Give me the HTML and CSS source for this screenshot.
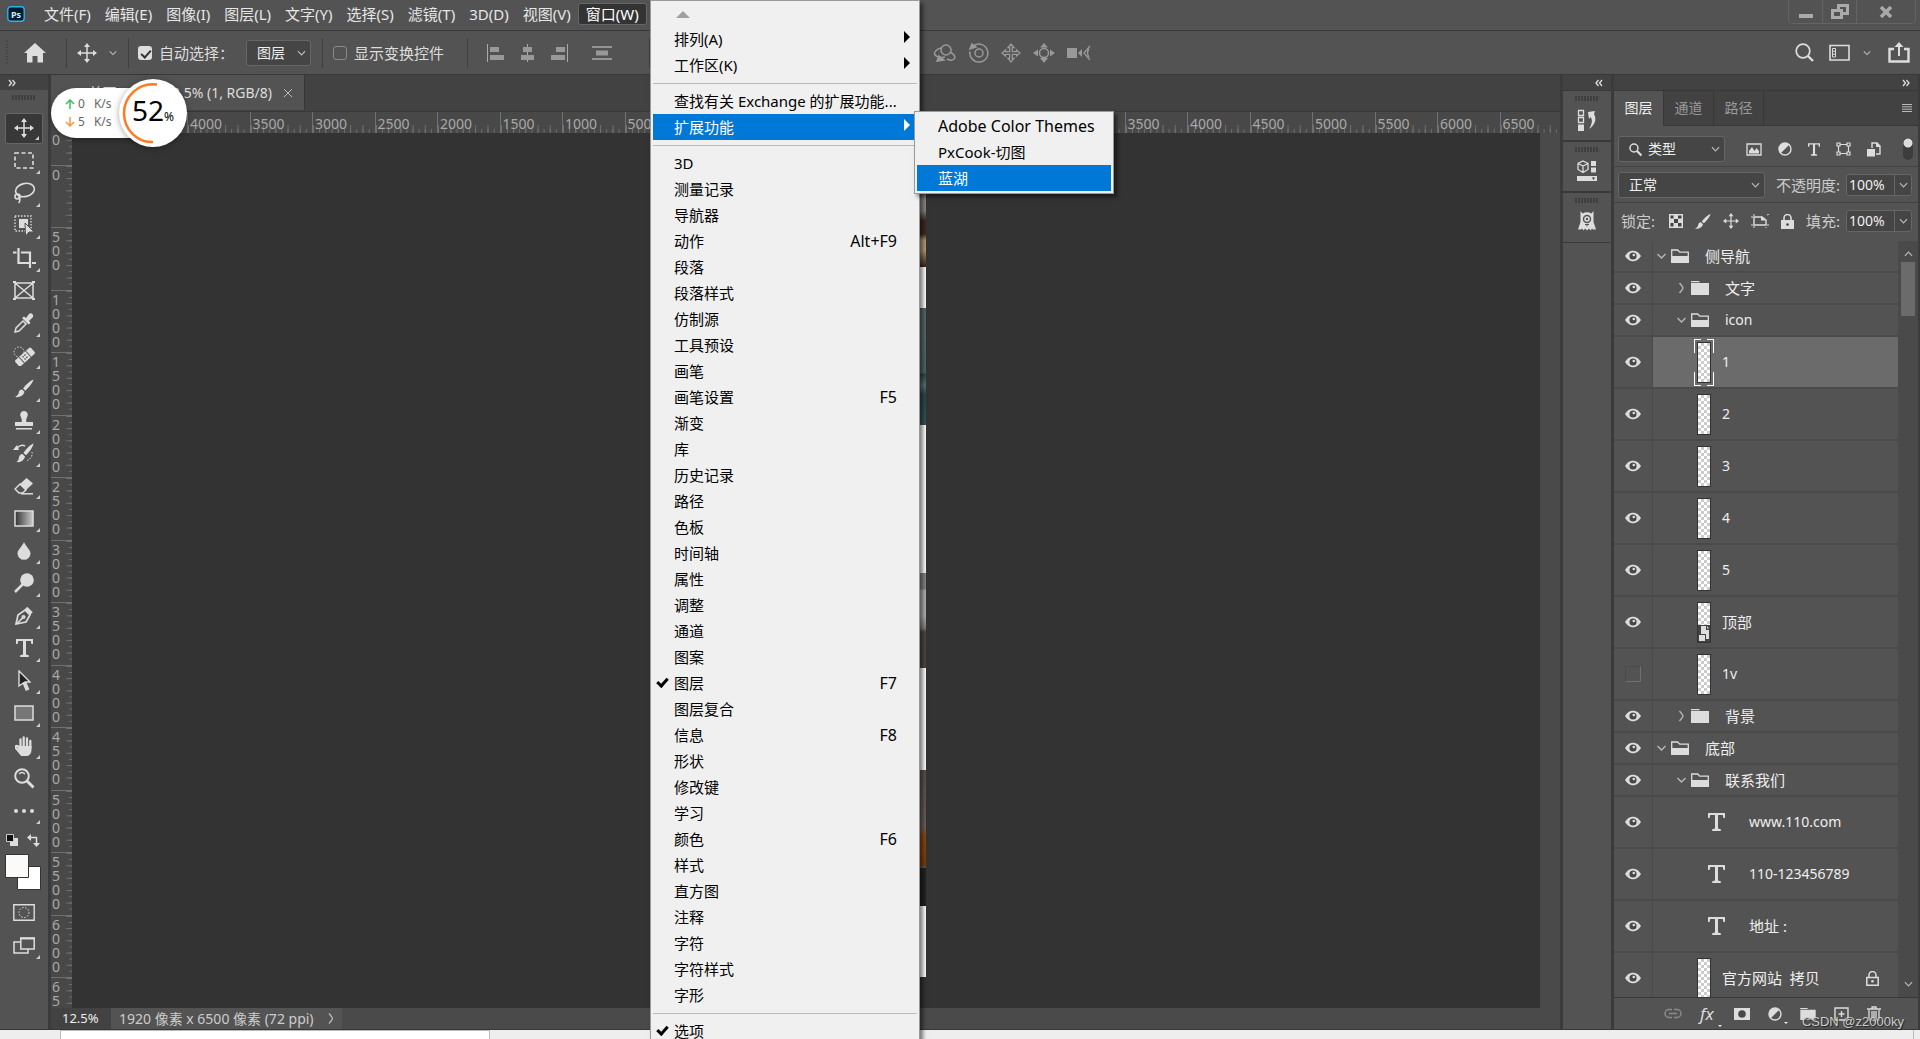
FILE: index.html
```html
<!DOCTYPE html>
<html lang="zh-CN">
<head>
<meta charset="utf-8">
<title>Photoshop</title>
<link rel="stylesheet" href="styles.css">
</head>
<body>
<svg class="defs" aria-hidden="true">
  <symbol id="eye" viewBox="0 0 16 12"><path d="M0 6C3 1.500 5.500.8 8 .8s5 .7 8 5.200c-3 4.500-5.500 5.200-8 5.200S3 10.500 0 6z" fill="#ddd"/><circle cx="8" cy="6" r="3.600" fill="#484848"/><circle cx="8.800" cy="5" r="1.300" fill="#ddd"/></symbol>
  <symbol id="down" viewBox="0 0 10 6"><path d="M1 1l4 4 4-4" fill="none" stroke="#bbb" stroke-width="1.300"/></symbol>
  <symbol id="right" viewBox="0 0 6 12"><path d="M1 1q3.500 4 3.500 5T1 11" fill="none" stroke="#bbb" stroke-width="1.300"/></symbol>
  <symbol id="folder-open" viewBox="0 0 18 14"><path d="M.7 13V1h6l2 2.200h8.600V7" fill="none" stroke="#ddd" stroke-width="1.300"/><path d="M0 7h18v7H0z" fill="#ddd"/></symbol>
  <symbol id="folder" viewBox="0 0 18 14"><path d="M0 0h8l1 1.200H0zM0 2h18v12H0z" fill="#ddd"/></symbol>
  <symbol id="tee" viewBox="0 0 17 18"><path d="M0 0h17v5h-1.600l-.6-3H10v13.500l2.800.7V18H4.200v-1.800l2.800-.7V2H2.200l-.6 3H0z" fill="#ddd"/></symbol>
  <symbol id="move" viewBox="0 0 20 20"><path d="M10 2v16M2 10h16" stroke="#ddd" stroke-width="1.500"/><path d="M10 0l3 4H7zM10 20l3-4H7zM0 10l4-3v6zM20 10l-4-3v6z" fill="#ddd"/></symbol>
  <symbol id="brush" viewBox="0 0 20 20"><path d="M19.500.5c-4 1.500-9 6.500-11 9.500l2.500 2.300C14 9.500 18.500 4.500 19.500.5zM7.500 11c-2 0-3.200 1.300-3.500 3.200-.3 2-1.500 3.500-4 4.800 5 .8 9-1.500 10-5.500z" fill="#ddd"/></symbol>
  <symbol id="contrast" viewBox="0 0 14 14"><circle cx="7" cy="7" r="6" fill="none" stroke="#ddd" stroke-width="1.400"/><path d="M11.300 2.700A6 6 0 0 0 2.700 11.300z" fill="#ddd"/></symbol>
</svg>
<div class="app">
  <header class="menubar">
    <svg class="logo" width="18" height="16" viewBox="0 0 18 16"><rect x=".8" y=".8" width="16.400" height="14.400" rx="3" fill="#001d2b" stroke="#2bb3e8" stroke-width="1.400"/><text x="9" y="12" text-anchor="middle" class="logo-text">Ps</text></svg>
    <nav class="menus">
      <button>文件(F)</button><button>编辑(E)</button><button>图像(I)</button><button>图层(L)</button><button>文字(Y)</button><button>选择(S)</button><button>滤镜(T)</button><button>3D(D)</button><button>视图(V)</button><button class="open">窗口(W)</button>
    </nav>
    <div class="winctl">
      <button aria-label="最小化"><svg width="14" height="14" viewBox="0 0 14 14"><path d="M0 9h14v4H0z" fill="#aaa"/></svg></button>
      <button aria-label="还原"><svg width="18" height="16" viewBox="0 0 18 16"><path d="M7.500 6V1.500h9v8H12M1.500 6.500h9v7h-9z" fill="none" stroke="#aaa" stroke-width="3"/></svg></button>
      <button class="wide" aria-label="关闭"><svg width="14" height="12" viewBox="0 0 14 12"><path d="M2 1l10 10M12 1L2 11" stroke="#aaa" stroke-width="3.500"/></svg></button>
    </div>
  </header>

  <div class="options">
    <span class="grip-v"></span>
    <button class="home" aria-label="主页"><svg width="22" height="20" viewBox="0 0 22 20"><path d="M11 0l11 10h-3v9.500h-5.500V13h-5v6.500H3V10H0z" fill="#ddd"/></svg></button>
    <span class="divider"></span>
    <button class="movetool" aria-label="移动工具"><svg width="20" height="20"><use href="#move"/></svg><svg width="8" height="6"><use href="#down"/></svg></button>
    <span class="divider"></span>
    <label class="check auto"><input type="checkbox" checked>自动选择：</label>
    <span class="select small"><select aria-label="自动选择"><option>图层</option></select><svg width="9" height="6"><use href="#down"/></svg></span>
    <span class="divider"></span>
    <label class="check show"><input type="checkbox">显示变换控件</label>
    <span class="divider"></span>
    <div class="align">
      <svg width="17" height="18" viewBox="0 0 17 18"><path d="M.5 0v18" stroke="#aaa"/><path d="M3 3h9v5H3zM3 11h14v5H3z" fill="#999"/></svg>
      <svg width="15" height="18" viewBox="0 0 15 18"><path d="M7.500 0v18" stroke="#aaa"/><path d="M3 3h9v5H3zM1 11h13v5H1z" fill="#999"/></svg>
      <svg width="17" height="18" viewBox="0 0 17 18"><path d="M16.500 0v18" stroke="#aaa"/><path d="M5 3h9v5H5zM0 11h14v5H0z" fill="#999"/></svg>
      <svg class="dist" width="20" height="14" viewBox="0 0 20 14"><path d="M0 1h20M0 13h20" stroke="#aaa" stroke-width="1.500"/><path d="M4 4.500h12v5H4z" fill="#999"/></svg>
    </div>
    <span class="divider"></span>
    <div class="threed">
      <svg width="24" height="20" viewBox="0 0 24 20" fill="none" stroke="#999" stroke-width="1.500"><circle cx="13" cy="7" r="5"/><path d="M8 5C3 6 .5 10 2 12s6 3 10 2M17 9c4 2 6 5 4 7s-5 1-7 0"/><path d="M4 18l2-5 5 4z" fill="#999"/></svg>
      <svg width="20" height="20" viewBox="0 0 20 20" fill="none" stroke="#999" stroke-width="1.500"><circle cx="10" cy="10" r="4"/><path d="M5 2.500a9 9 0 1 1-4 6M3 14"/><path d="M1 6l2-5 4 3z" fill="#999"/></svg>
      <svg width="20" height="20" viewBox="0 0 20 20" fill="none" stroke="#999" stroke-width="1.300"><path d="M10 1l3 3.500h-1.700v4.200h4.200V7l3.500 3-3.500 3v-1.700h-4.200v4.200H13L10 19l-3-3.500h1.700v-4.200H4.500V13L1 10l3.500-3v1.700h4.200V4.500H7z"/></svg>
      <svg width="22" height="20" viewBox="0 0 22 20" fill="#999"><circle cx="11" cy="10" r="4.500" fill="none" stroke="#999" stroke-width="1.500"/><path d="M11 0l4 4.500H7zM11 20l4-5H7zM0 10l5-3.500v7zM22 10l-5-3.500v7z"/></svg>
      <svg width="24" height="16" viewBox="0 0 24 16" fill="#999"><path d="M0 3h10v10H0zM11 8l4-4v8z"/><path d="M23 1l-6 7 6 7M22 4q-3 4 0 8" fill="none" stroke="#999" stroke-width="1.300"/></svg>
    </div>
    <div class="right-tools">
      <button aria-label="搜索"><svg width="19" height="19" viewBox="0 0 19 19" fill="none" stroke="#ddd"><circle cx="8" cy="8" r="6.800" stroke-width="1.700"/><path d="M13 13l5 5" stroke-width="2.400"/></svg></button>
      <button class="ws" aria-label="工作区"><svg width="21" height="17" viewBox="0 0 21 17" fill="none" stroke="#ddd"><path d="M1 1.500h19v14.500H1z" stroke-width="1.600"/><path d="M3.500 4.500h3v8.500h-3zM3.500 7.300h3M3.500 10.200h3"/></svg><svg width="8" height="6"><use href="#down"/></svg></button>
      <button aria-label="共享"><svg width="22" height="21" viewBox="0 0 22 21"><path d="M6 7H1.500v12.500h19V7H16" fill="none" stroke="#ddd" stroke-width="2.400"/><path d="M11 14V3" stroke="#ddd" stroke-width="2"/><path d="M11 0l4.500 5h-9z" fill="#ddd"/></svg></button>
    </div>
  </div>

  <main class="work">
    <aside class="tools">
      <div class="colhead left"><svg width="8" height="8" viewBox="0 0 8 8"><path d="M1 1l2.500 3L1 7M4.500 1L7 4 4.500 7" fill="none" stroke="#ddd" stroke-width="1.300"/></svg></div>
      <div class="grip"></div>
      <div class="toollist">
        <button class="more on" aria-label="移动"><svg width="20" height="20"><use href="#move"/></svg></button>
        <button class="more" aria-label="选框"><svg width="20" height="17" viewBox="0 0 20 17"><path d="M1 1h18v15H1z" fill="none" stroke="#ddd" stroke-width="1.600" stroke-dasharray="4 2.500"/></svg></button>
        <button class="more" aria-label="套索"><svg width="22" height="22" viewBox="0 0 22 22" fill="none" stroke="#ddd" stroke-width="1.600"><ellipse cx="12" cy="8" rx="9.500" ry="6.500" transform="rotate(-12 12 8)"/><circle cx="4.500" cy="14.500" r="2.500"/><path d="M5 15c2.500 1 2.500 4 .5 6"/></svg></button>
        <button class="more" aria-label="对象选择"><svg width="20" height="22" viewBox="0 0 20 22"><path d="M1 1h16v15H1z" fill="none" stroke="#ddd" stroke-width="1.300" stroke-dasharray="1.500 1.500"/><path d="M5 4h9v9H5z" fill="#ddd"/><path d="M11 8l9 9h-5l-3.500 4z" fill="#ddd" stroke="#535353"/></svg></button>
        <button class="more" aria-label="裁剪"><svg width="23" height="20" viewBox="0 0 23 20" fill="none" stroke="#ddd" stroke-width="2.200"><path d="M5.500 0v15H17M0 4.500h3.500M8 4.500h9V20M19 15h4"/></svg></button>
        <button aria-label="图框"><svg width="22" height="19" viewBox="0 0 22 19" fill="none" stroke="#ddd" stroke-width="1.500"><path d="M2 2h18v15H2zM2 2l18 15M20 2L2 17"/><path d="M0 1h3M19 1h3M0 18h3M19 18h3" stroke-width="2"/></svg></button>
        <button class="more" aria-label="吸管"><svg width="20" height="20" viewBox="0 0 20 20"><path d="M9 8l3 3-7 7-4 1 1-4z" fill="none" stroke="#ddd" stroke-width="1.500"/><path d="M8 5l2-1.500 2 1.500 3-4c2-2 5 .5 4 3l-4 4 1.500 2-2 1.500z" fill="#ddd"/></svg></button>
        <button class="more" aria-label="修复画笔"><svg width="22" height="20" viewBox="0 0 22 20"><circle cx="6" cy="6" r="5" fill="none" stroke="#ddd" stroke-dasharray="1.500 1.500"/><g transform="rotate(-42 12 11)"><rect x="1.500" y="7" width="21" height="8" rx="1.500" fill="#ddd"/><path d="M7.500 7v8M16.500 7v8" stroke="#535353"/><path d="M10 9.500h4M10 12.500h4" stroke="#535353" stroke-width="1.300" stroke-dasharray="1.500 1"/></g></svg></button>
        <button class="more" aria-label="画笔"><svg width="19" height="19"><use href="#brush"/></svg></button>
        <button class="more" aria-label="图章"><svg width="18" height="19" viewBox="0 0 18 19" fill="#ddd"><path d="M9 0a4 4 0 0 1 3 6.500c-1 1.500-1 3-.5 4.500H18v4H0v-4h6.500c.5-1.500.5-3-.5-4.500A4 4 0 0 1 9 0zM1 17h16v1.500H1z"/></svg></button>
        <button class="more" aria-label="历史记录画笔"><svg width="22" height="20" viewBox="0 0 22 20"><path d="M20.500.5c-4 1.500-8 6.500-10 9.500l2.500 2.300c3-3 7-8 7.500-11.800zM9.500 11c-2 0-3.200 1.300-3.500 3.200-.2 2-1 3.500-2.500 4.800 4 .8 7.500-1.500 8.500-5.500z" fill="#ddd"/><path d="M0 7l4-5 2 5z" fill="#ddd"/><path d="M4 5c3-3 6-3 8-2" fill="none" stroke="#ddd" stroke-width="1.500"/><path d="M19 9c1 4-2 8-6 9" fill="none" stroke="#ddd" stroke-dasharray="1.500 1.500"/></svg></button>
        <button class="more" aria-label="橡皮擦"><svg width="20" height="18" viewBox="0 0 20 18"><path d="M12.500 1L19 6.500 12 13 6 7z" fill="#ddd"/><path d="M6 7l6 6-3.500 3H5l-4-4z" fill="none" stroke="#ddd" stroke-width="1.500"/><path d="M7 16.800h12" stroke="#ddd" stroke-width="1.500"/></svg></button>
        <button class="more" aria-label="渐变"><svg width="20" height="17" viewBox="0 0 20 17"><linearGradient id="gr"><stop offset="0" stop-color="#333"/><stop offset="1" stop-color="#ccc"/></linearGradient><path d="M1 1h18v15H1z" fill="url(#gr)" stroke="#ddd" stroke-width="1.500"/></svg></button>
        <button class="more" aria-label="模糊"><svg width="14" height="18" viewBox="0 0 14 18"><path d="M7 0c2 5 6.500 7.500 6.500 11.500A6.500 6.300 0 0 1 .5 11.500C.5 7.500 5 5 7 0z" fill="#ddd"/></svg></button>
        <button class="more" aria-label="减淡"><svg width="20" height="20" viewBox="0 0 20 20"><circle cx="13" cy="7" r="6.800" fill="#ddd"/><path d="M9 11l-8 8" stroke="#ddd" stroke-width="2.500"/></svg></button>
        <button class="more" aria-label="钢笔"><svg width="18" height="20" viewBox="0 0 18 20" fill="none" stroke="#ddd" stroke-width="1.700"><path d="M1 18l2-9 7-5 5 5-4 7z"/><path d="M1.500 18L8 11.500"/><circle cx="8.500" cy="11" r="1.200"/><path d="M11 2l5.500 5.500" stroke-width="3.500"/></svg></button>
        <button class="more" aria-label="文字"><svg width="17" height="18"><use href="#tee"/></svg></button>
        <button class="more" aria-label="路径选择"><svg width="13" height="21" viewBox="0 0 13 21"><path d="M1 1l11 11H7.500l3 7-2.300 1-3-7L1 16z" fill="#222" stroke="#ddd" stroke-width="1.400"/><path d="M6 12l3.500 8" stroke="#ddd" stroke-width="2"/></svg></button>
        <button class="more" aria-label="矩形"><svg width="20" height="16" viewBox="0 0 20 16"><path d="M1 1h18v14H1z" fill="#777" stroke="#ddd" stroke-width="1.500"/></svg></button>
        <button class="more" aria-label="抓手"><svg width="18" height="20" viewBox="0 0 18 20"><path d="M7 19C4.500 17 3 14 .8 11.800c-1.200-1.300.5-2.500 2-1.500L5 12M5.500 12V3.500M8.700 10V1.500M12 10V2.500M15.300 12V5" fill="none" stroke="#ddd" stroke-width="2.300" stroke-linecap="round"/><path d="M4 10h12.500v4c0 3-2 5.500-4 6H8c-3-1-4-5-5-7z" fill="#ddd"/></svg></button>
        <button aria-label="缩放"><svg width="21" height="21" viewBox="0 0 21 21" fill="none" stroke="#ddd"><circle cx="8" cy="8" r="6.800" stroke-width="2"/><path d="M13 13l6.500 6.500" stroke-width="3"/><path d="M5 6q3-3 6 0" stroke-width="1.300"/></svg></button>
        <button class="more" aria-label="更多工具"><svg width="20" height="4" viewBox="0 0 20 4" fill="#ddd"><circle cx="2" cy="2" r="2"/><circle cx="10" cy="2" r="2"/><circle cx="18" cy="2" r="2"/></svg></button>
      </div>
      <div class="swaprow">
        <svg width="12" height="12" viewBox="0 0 12 12"><path d="M4 4h8v8H4z" fill="#ddd"/><path d="M.5.500h7v7h-7z" fill="#111" stroke="#ccc"/></svg>
        <svg width="13" height="13" viewBox="0 0 13 13"><path d="M2 3.500h7.500V11" fill="none" stroke="#ddd" stroke-width="1.500"/><path d="M0 3.500L4 0v7zM9.500 13L6 9h7z" fill="#ddd"/></svg>
      </div>
      <svg class="swatches" width="36" height="36" viewBox="0 0 36 36"><path d="M12.500 12.500h23v23h-23z" fill="#fff" stroke="#333"/><path d="M.5.500h23v23H.5z" fill="#fbfaf8" stroke="#333"/></svg>
      <div class="modes">
        <button aria-label="快速蒙版"><svg width="22" height="17" viewBox="0 0 22 17" fill="none" stroke="#ddd"><path d="M.8.800h20.400v15.400H.8z" stroke-width="1.400"/><circle cx="11" cy="8.500" r="5" stroke-dasharray="1.500 1.500"/></svg></button>
        <button class="more" aria-label="屏幕模式"><svg width="22" height="17" viewBox="0 0 22 17"><path d="M1 5h14v11H1z" fill="none" stroke="#ddd" stroke-width="1.500"/><path d="M7.800 1h13.400v11H7.800z" fill="#535353" stroke="#ddd" stroke-width="1.500"/><path d="M7 1.500h15" stroke="#ddd" stroke-width="2"/></svg></button>
      </div>
    </aside>

    <section class="doc">
      <div class="doctabs"><div class="doctab"><span>首页.psd @ 12.5% (1, RGB/8)</span><button aria-label="关闭文档"><svg width="10" height="10" viewBox="0 0 10 10"><path d="M1 1l8 8M9 1L1 9" stroke="#bbb"/></svg></button></div></div>
      <div class="ruler-h"><div class="track-h"><i></i><i></i><i>4000</i><i>3500</i><i>3000</i><i>2500</i><i>2000</i><i>1500</i><i>1000</i><i>500</i><i></i><i></i><i></i><i></i><i></i><i></i><i></i><i>3500</i><i>4000</i><i>4500</i><i>5000</i><i>5500</i><i>6000</i><i>6500</i></div></div>
      <div class="view">
        <div class="ruler-v"><div class="track-v"><i>500</i><i>0</i><i>500</i><i>1000</i><i>1500</i><i>2000</i><i>2500</i><i>3000</i><i>3500</i><i>4000</i><i>4500</i><i>5000</i><i>5500</i><i>6000</i><i>65</i><i></i></div></div>
        <div class="canvas"><div class="artboard"><div class="ph wood"></div><div class="gap1"></div><div class="ph teal"></div><div class="gap2"></div><div class="ph grey"></div><div class="gap3"></div><div class="ph brown"></div><div class="ph dark"></div><div class="gap4"></div></div></div>
        <div class="vscroll"></div>
      </div>
      <div class="status"><span class="zoom">12.5%</span><span class="info">1920 像素 x 6500 像素 (72 ppi)<svg width="6" height="13"><use href="#right"/></svg></span></div>
    </section>

    <aside class="dock">
      <div class="colhead right"><svg width="8" height="8" viewBox="0 0 8 8"><path d="M3.500 1L1 4l2.500 3M7 1L4.500 4 7 7" fill="none" stroke="#ddd" stroke-width="1.300"/></svg></div>
      <div class="dockbox"><div class="grip"></div><button aria-label="历史记录"><svg width="20" height="22" viewBox="0 0 20 22"><path d="M1.500 1.500h5v5h-5zM1.500 8.500h5v5h-5z" fill="none" stroke="#ddd" stroke-width="1.300"/><path d="M1 15.500h6V22H1z" fill="#ddd"/><path d="M11 3l7-1-1 3c3 5 1 11-5 15 3-5 4-9 1.500-12L12 10z" fill="#ddd"/></svg></button></div>
      <div class="dockbox"><div class="grip"></div><button aria-label="属性"><svg width="20" height="22" viewBox="0 0 20 22"><path d="M6 1l5 2.500v6L6 12.500 1 9.500v-6zM1 3.500L6 6l5-2.500M6 6v6" fill="none" stroke="#ddd" stroke-width="1.300"/><path d="M14 1h5v5h-5zM14 7.500h5v5h-5zM0 16h20v5H0z" fill="#ddd"/><path d="M15 17.500h3L16.500 20z" fill="#333"/></svg></button></div>
      <div class="dockbox"><div class="grip"></div><button aria-label="扩展"><svg width="18" height="20" viewBox="0 0 18 20"><path d="M2.500 0l2 2.500Q9 0 13.500 2.500l2-2.500v11l2.500 7.500h-3l-1-1-1.500 2-1.500-2-2 2-2-2-1.500 2L4 17.500l-1 1H0L2.500 11z" fill="#ddd"/><circle cx="9" cy="8" r="3.500" fill="#ddd" stroke="#535353" stroke-width="1.500"/><circle cx="9" cy="8" r="1.200" fill="#535353"/><path d="M7 13.500h4M9 13.500v2" stroke="#535353"/></svg></button></div>
    </aside>

    <aside class="panel">
      <div class="colhead right"><svg width="8" height="8" viewBox="0 0 8 8"><path d="M1 1l2.500 3L1 7M4.500 1L7 4 4.500 7" fill="none" stroke="#ddd" stroke-width="1.300"/></svg></div>
      <div class="tabs"><button class="sel">图层</button><button>通道</button><button>路径</button><svg width="10" height="8" viewBox="0 0 10 8"><path d="M0 .5h10M0 2.800h10M0 5.200h10M0 7.500h10" stroke="#bbb"/></svg></div>
      <div class="prow filter">
        <span class="select kind"><svg class="mag" width="13" height="13" viewBox="0 0 13 13" fill="none" stroke="#ddd"><circle cx="5" cy="5" r="4" stroke-width="1.500"/><path d="M8 8l4.500 4.500" stroke-width="2.200"/></svg><select aria-label="图层过滤"><option>类型</option></select><svg width="9" height="6"><use href="#down"/></svg></span>
        <div class="ficons">
          <svg width="16" height="13" viewBox="0 0 16 13"><path d="M1 1h14v11H1z" fill="none" stroke="#ddd" stroke-width="1.300"/><path d="M3 10.500V8l3-4 2.500 4 2-3L13 8v2.500z" fill="#ddd"/></svg>
          <svg width="14" height="14"><use href="#contrast"/></svg>
          <svg width="12" height="13"><use href="#tee"/></svg>
          <svg width="15" height="14" viewBox="0 0 15 14" fill="#535353" stroke="#ddd" stroke-width="1.200"><path d="M2.500 2.500h10v9h-10z"/><path d="M1 1h3v3H1zM11 1h3v3h-3zM1 10h3v3H1zM11 10h3v3h-3z"/></svg>
          <svg width="14" height="15" viewBox="0 0 14 15"><path d="M5 6V1h5l3 3v8H9" fill="none" stroke="#ddd" stroke-width="1.400"/><path d="M9.500 1v3.500H13" fill="#ddd" stroke="#ddd"/><path d="M0 7h8v7.500H0z" fill="#ddd"/></svg>
        </div>
        <label class="toggle"><input type="checkbox" checked aria-label="过滤开关"></label>
      </div>
      <div class="prow blend">
        <span class="select mode"><select aria-label="混合模式"><option>正常</option></select><svg width="9" height="6"><use href="#down"/></svg></span>
        <label class="num">不透明度:<span><input type="text" value="100%"><svg width="9" height="6"><use href="#down"/></svg></span></label>
      </div>
      <div class="prow lock">
        <span class="lab">锁定:</span>
        <div class="licons">
          <svg width="14" height="14" viewBox="0 0 14 14"><path d="M0 0h14v14H0z" fill="#ddd"/><path d="M1.500 1.500h3v3h-3zM9 1.500h3.500v3H9zM5 5h4v4H5zM1.500 9h3v3.500h-3zM9 9h3.500v3.500H9z" fill="#444"/></svg>
          <svg width="16" height="17"><use href="#brush"/></svg>
          <svg width="16" height="16"><use href="#move"/></svg>
          <svg width="18" height="14" viewBox="0 0 18 14"><path d="M3 3h8l4 3v5H3z" fill="none" stroke="#ddd" stroke-width="1.400"/><path d="M0 3h2M3 0v2M16 1l2-1M15 13v1M3 12v2M16 11h2M0 11h2" stroke="#ddd"/><path d="M10 2l5 4.500h-5z" fill="#ddd"/></svg>
          <svg width="13" height="15" viewBox="0 0 13 15"><path d="M3 7V4a3.500 3.500 0 0 1 7 0v3" fill="none" stroke="#ddd" stroke-width="1.600"/><path d="M0 6h13v9H0z" fill="#ddd"/><circle cx="6.500" cy="10.500" r="1.300" fill="#444"/></svg>
        </div>
        <label class="num">填充:<span><input type="text" value="100%"><svg width="9" height="6"><use href="#down"/></svg></span></label>
      </div>
      <div class="layers">
        <ul class="rows">
          <li><svg class="eye" width="16" height="12"><use href="#eye"/></svg><div class="lv0"><svg class="tw" width="11" height="6"><use href="#down"/></svg><svg width="18" height="14"><use href="#folder-open"/></svg><span>侧导航</span></div></li>
          <li><svg class="eye" width="16" height="12"><use href="#eye"/></svg><div class="lv1"><svg class="tw" width="11" height="12"><use href="#right"/></svg><svg width="18" height="14"><use href="#folder"/></svg><span>文字</span></div></li>
          <li><svg class="eye" width="16" height="12"><use href="#eye"/></svg><div class="lv1"><svg class="tw" width="11" height="6"><use href="#down"/></svg><svg width="18" height="14"><use href="#folder-open"/></svg><span class="en">icon</span></div></li>
          <li class="big cur"><svg class="eye" width="16" height="12"><use href="#eye"/></svg><div class="lt"><b class="thumb framed"></b><span class="en">1</span></div></li>
          <li class="big"><svg class="eye" width="16" height="12"><use href="#eye"/></svg><div class="lt"><b class="thumb"></b><span class="en">2</span></div></li>
          <li class="big"><svg class="eye" width="16" height="12"><use href="#eye"/></svg><div class="lt"><b class="thumb"></b><span class="en">3</span></div></li>
          <li class="big"><svg class="eye" width="16" height="12"><use href="#eye"/></svg><div class="lt"><b class="thumb"></b><span class="en">4</span></div></li>
          <li class="big"><svg class="eye" width="16" height="12"><use href="#eye"/></svg><div class="lt"><b class="thumb"></b><span class="en">5</span></div></li>
          <li class="big"><svg class="eye" width="16" height="12"><use href="#eye"/></svg><div class="lt"><b class="thumb"><svg width="12" height="17" viewBox="0 0 12 17"><path d="M0 0h12v17H0z" fill="#444"/><path d="M3 1h5v4h3v9H8V9H3zM1 10h6v6H1zM9 1l2 2.500H9z" fill="#ddd"/></svg></b><span>顶部</span></div></li>
          <li class="big"><em class="noeye"></em><div class="lt"><b class="thumb"></b><span class="en">1v</span></div></li>
          <li><svg class="eye" width="16" height="12"><use href="#eye"/></svg><div class="lv1"><svg class="tw" width="11" height="12"><use href="#right"/></svg><svg width="18" height="14"><use href="#folder"/></svg><span>背景</span></div></li>
          <li><svg class="eye" width="16" height="12"><use href="#eye"/></svg><div class="lv0"><svg class="tw" width="11" height="6"><use href="#down"/></svg><svg width="18" height="14"><use href="#folder-open"/></svg><span>底部</span></div></li>
          <li><svg class="eye" width="16" height="12"><use href="#eye"/></svg><div class="lv1"><svg class="tw" width="11" height="6"><use href="#down"/></svg><svg width="18" height="14"><use href="#folder-open"/></svg><span>联系我们</span></div></li>
          <li class="big"><svg class="eye" width="16" height="12"><use href="#eye"/></svg><div class="tx"><svg width="17" height="18"><use href="#tee"/></svg><span class="en">www.110.com</span></div></li>
          <li class="big"><svg class="eye" width="16" height="12"><use href="#eye"/></svg><div class="tx"><svg width="17" height="18"><use href="#tee"/></svg><span class="en">110-123456789</span></div></li>
          <li class="big"><svg class="eye" width="16" height="12"><use href="#eye"/></svg><div class="tx"><svg width="17" height="18"><use href="#tee"/></svg><span>地址 :</span></div></li>
          <li class="big"><svg class="eye" width="16" height="12"><use href="#eye"/></svg><div class="lt"><b class="thumb"></b><span>官方网站&nbsp; 拷贝</span><svg class="padlock" width="13" height="15" viewBox="0 0 13 15"><path d="M3 6V4a3.500 3.500 0 0 1 7 0v2M.8 6.500h11.400v7.700H.8z" fill="none" stroke="#ddd" stroke-width="1.500"/><circle cx="6.500" cy="10.300" r="1.300" fill="#ddd"/></svg></div></li>
        </ul>
        <div class="lscroll"><svg class="up" width="9" height="6"><use href="#down"/></svg><div class="thumbbar"></div><svg width="9" height="6"><use href="#down"/></svg></div>
      </div>
      <div class="pfoot">
        <svg width="18" height="11" viewBox="0 0 18 11" fill="none" stroke="#8a8a8a" stroke-width="1.500"><path d="M8 1.500H5a4 4 0 0 0 0 8h3M10 1.500h3a4 4 0 0 1 0 8h-3M5 5.500h8"/></svg>
        <span class="fx caret">fx</span>
        <svg width="16" height="12" viewBox="0 0 16 12"><path d="M0 0h16v12H0z" fill="#ddd"/><circle cx="8" cy="6" r="3.800" fill="#484848"/></svg>
        <span class="caret"><svg width="14" height="14"><use href="#contrast"/></svg></span>
        <svg width="16" height="12"><use href="#folder"/></svg>
        <svg width="15" height="14" viewBox="0 0 15 14" fill="none" stroke="#ddd" stroke-width="1.400"><path d="M1 1h13v12H1zM7.500 4v6M4.500 7h6"/></svg>
        <svg width="14" height="15" viewBox="0 0 14 15" fill="none" stroke="#ddd" stroke-width="1.300"><path d="M0 3h14M5 3V1h4v2M2 4v10h10V4M5 5v8M7 5v8M9 5v8"/></svg>
        <span class="csdn">CSDN @z2000ky</span>
      </div>
    </aside>
  </main>

  <footer class="taskbar"><div class="searchbox"></div><span class="clock">14:50</span></footer>

  <div class="netpill"><p><svg width="10" height="10" viewBox="0 0 10 10"><path d="M5 10V1.500M1 5l4-4 4 4" fill="none" stroke="#3dbf5a" stroke-width="1.500"/></svg><span>0</span>K/s</p><p><svg width="10" height="10" viewBox="0 0 10 10"><path d="M5 0v8.500M1 5l4 4 4-4" fill="none" stroke="#ff9540" stroke-width="1.500"/></svg><span>5</span>K/s</p></div>
  <div class="netball"><svg width="68" height="68" viewBox="0 0 68 68"><path d="M38 5.500C19 3 5 18 5 34s13 30 29 29" fill="none" stroke="#ff7a22" stroke-width="2.500"/></svg><p>52<small>%</small></p></div>

  <ul class="menu">
    <li class="scroller"><svg width="14" height="7" viewBox="0 0 14 7"><path d="M7 0l7 7H0z" fill="#a0a0a0"/></svg></li>
    <li><button class="sub">排列(A)</button></li>
    <li><button class="sub">工作区(K)</button></li>
    <li class="sep"></li>
    <li><button>查找有关 Exchange 的扩展功能...</button></li>
    <li><button class="sub hot">扩展功能</button></li>
    <li class="sep"></li>
    <li><button>3D</button></li><li><button>测量记录</button></li><li><button>导航器</button></li>
    <li><button>动作<kbd>Alt+F9</kbd></button></li>
    <li><button>段落</button></li><li><button>段落样式</button></li><li><button>仿制源</button></li><li><button>工具预设</button></li><li><button>画笔</button></li>
    <li><button>画笔设置<kbd>F5</kbd></button></li>
    <li><button>渐变</button></li><li><button>库</button></li><li><button>历史记录</button></li><li><button>路径</button></li><li><button>色板</button></li><li><button>时间轴</button></li><li><button>属性</button></li><li><button>调整</button></li><li><button>通道</button></li><li><button>图案</button></li>
    <li><button class="tick">图层<kbd>F7</kbd></button></li>
    <li><button>图层复合</button></li>
    <li><button>信息<kbd>F8</kbd></button></li>
    <li><button>形状</button></li><li><button>修改键</button></li><li><button>学习</button></li>
    <li><button>颜色<kbd>F6</kbd></button></li>
    <li><button>样式</button></li><li><button>直方图</button></li><li><button>注释</button></li><li><button>字符</button></li><li><button>字符样式</button></li><li><button>字形</button></li>
    <li class="sep"></li>
    <li><button class="tick">选项</button></li>
  </ul>
  <ul class="menu submenu">
    <li><button class="wide-latin">Adobe Color Themes</button></li>
    <li><button>PxCook-切图</button></li>
    <li><button class="hot">蓝湖</button></li>
  </ul>
</div>
</body>
</html>
```
FILE: styles.css
```css
* { box-sizing: border-box; }
body { margin: 0; background: #535353; color: #ddd; font: 15px/20px "Noto Sans", "Noto Sans CJK SC", sans-serif; }
button, select, input { font: inherit; color: inherit; }
button { background: none; border: 0; padding: 0; display: flex; align-items: center; white-space: nowrap; }
ul, p { margin: 0; padding: 0; list-style: none; }
svg { flex: none; display: block; }
.defs { position: absolute; width: 0; height: 0; }

.app { position: relative; height: 100vh; overflow: hidden; display: grid; grid-template-rows: 31px 44px minmax(0, 1fr) 9px; }

/* menu bar */
.menubar { display: flex; align-items: center; border-bottom: 1px solid #383838; padding: 0 4px 2px 0; }
.logo { margin-left: 7px; }
.logo-text { font: bold 9px "Noto Sans", sans-serif; fill: #cdeeff; }
.menus { display: flex; margin-left: 12px; }
.menus button { padding: 0 7px; height: 22px; color: #e6e6e6; }
.menus .open { background: #333; border: 1px solid #666; border-radius: 3px; color: #fff; padding: 0 7px; }
.winctl { display: flex; align-self: flex-start; margin-left: auto; border: 1px solid #646464; border-top: 0; border-radius: 0 0 5px 5px; }
.winctl button { width: 34px; height: 23px; justify-content: center; border-right: 1px solid #646464; }
.winctl .wide { width: 58px; border: 0; }

/* options bar */
.options { display: flex; align-items: center; border-bottom: 1px solid #383838; padding: 0 10px 0 6px; }
.grip-v { width: 2px; height: 24px; background: repeating-linear-gradient(#404040 0 1px, transparent 1px 3px); }
.home { margin: 0 20px 0 16px; }
.divider { width: 1px; height: 30px; background: #3f3f3f; }
.movetool { gap: 12px; margin: 0 11px 0 10px; }
.check { display: flex; align-items: center; gap: 7px; height: 24px; white-space: nowrap; }
.check input { appearance: none; width: 14px; height: 14px; margin: 0; border: 1px solid #8a8a8a; border-radius: 3px; }
.check input:checked { border: 0; background: #ddd; }
.check input:checked::after { content: ""; display: block; width: 8px; height: 4px; margin: 4px 0 0 3px; border: solid #333; border-width: 0 0 2px 2px; transform: rotate(-48deg); }
.auto { width: 108px; margin-left: 9px; }
.show { margin: 0 23px 0 10px; }
.select { display: flex; align-items: center; background: #454545; border: 1px solid #666; border-radius: 3px; height: 26px; padding-right: 4px; }
.select select { appearance: none; background: none; border: 0; padding: 0 0 0 10px; flex: 1; min-width: 0; height: 24px; color: #eee; outline: 0; }
.small { width: 65px; margin-right: 11px; }
.small select { font-size: 14px; }
.align { display: flex; align-items: center; gap: 16px; margin: 0 37px 0 19px; }
.align .dist { margin-left: 8px; }
.threed { display: flex; align-items: center; gap: 12px; margin-left: 283px; }
.right-tools { display: flex; align-items: center; gap: 15px; margin-left: auto; }
.ws { gap: 13px; margin-right: 2px; }

/* work area */
.work { display: grid; grid-template-columns: 48px minmax(0, 1fr) 48px 304px; grid-template-rows: minmax(0, 1fr); column-gap: 3px; padding-right: 2px; background: #3b3b3b; border-bottom: 1px solid #383838; }
.colhead { height: 15px; background: #424242; display: flex; align-items: center; padding: 0 8px; }
.colhead.right { justify-content: flex-end; }
.grip { width: 24px; height: 5px; margin: 5px auto 0; background: repeating-linear-gradient(90deg, #3f3f3f 0 2px, transparent 2px 3px); }

.tools { background: #535353; min-height: 0; overflow: hidden; }
.tools .grip { margin: 5px 12px 12px; }
.toollist { display: grid; grid-auto-rows: 1fr; height: 715px; padding: 0 5px; }
.toollist button, .modes button { position: relative; justify-content: center; }
.toollist .on { background: #383838; border: 1px solid #666; border-radius: 2px; margin: 1px 0; }
.more::after { content: ""; position: absolute; right: 3px; bottom: 3px; border: solid transparent; border-width: 2px; border-right-color: #ccc; border-bottom-color: #ccc; }
.swaprow { display: flex; gap: 9px; padding: 7px 0 0 6px; }
.swatches { margin: 7px 0 0 5px; }
.modes { display: grid; grid-auto-rows: 33px; padding: 6px 5px; }

/* document */
.doc { display: grid; grid-template-rows: 36px 22px minmax(0, 1fr) 21px; background: #424242; }
.doctab { display: flex; align-items: center; justify-content: flex-end; gap: 11px; width: 254px; height: 35px; background: #535353; padding-right: 11px; font-size: 14px; border-right: 1px solid #383838; white-space: nowrap; }
.ruler-h { background: #484848; border-top: 1px solid #383838; overflow: hidden; }
.track-h { display: flex; width: 1500px; height: 100%; margin-left: 11px; }
.track-h i { flex: 1; padding: 3px 0 0 2px; border-left: 1px solid #707070; background: linear-gradient(90deg, #707070 1px, transparent 1px) 0 100% / 20% 8px repeat-x, linear-gradient(90deg, #707070 1px, transparent 1px) 0 100% / 10% 4px repeat-x; }
.track-h i, .track-v i { font: normal 14px/18px "Noto Sans", sans-serif; color: #a8a8a8; }
.view { display: grid; grid-template-columns: 21px minmax(0, 1fr) 20px; grid-template-rows: minmax(0, 1fr); }
.ruler-v { background: #484848; overflow: hidden; }
.track-v { display: flex; flex-direction: column; height: 1000px; margin-top: -31px; }
.track-v i { flex: 1; min-height: 0; padding: 2px 10px 0 1px; line-height: 14px; word-break: break-all; border-top: 1px solid #707070; background: linear-gradient(#707070 1px, transparent 1px) 100% 0 / 6px 20% repeat-y, linear-gradient(#707070 1px, transparent 1px) 100% 0 / 3px 10% repeat-y; }
.canvas { background: #333; overflow: hidden; padding: 31px 0 0 614px; }
.artboard { width: 240px; background: #fff; }
.wood { height: 103px; background: linear-gradient(#8a8580 0 45%, #3b2a20 55% 68%, #b49878 74% 84%, #3a2418); }
.gap1 { height: 41px; }
.teal { height: 117px; background: linear-gradient(#56686a, #4d6668 55%, #2f474b 57%, #567478 66%, #2d474c 74%, #335558); }
.gap2 { height: 148px; }
.grey { height: 95px; background: linear-gradient(#858585 0 17%, #b2b2b2 18% 45%, #85807a 58%, #4f4740 62%, #50483f); }
.gap3 { height: 102px; }
.brown { height: 96px; background: linear-gradient(#5a504d, #6b5f5a 60%, #8a4a14 68%, #7a3c08); }
.dark { height: 40px; background: #222; border-top: 2px solid #555; }
.gap4 { height: 71px; }
.vscroll { background: #4a4a4a; }
.status { display: flex; background: #4a4a4a; font-size: 14px; }
.zoom { width: 60px; padding-left: 11px; background: #424242; color: #eee; font-size: 13px; }
.info { display: flex; align-items: center; gap: 14px; background: #535353; padding: 0 8px; color: #ccc; }

/* icon dock */
.dock { background: #535353; }
.dockbox { height: 51px; border-top: 1px solid #383838; border-bottom: 1px solid #383838; }
.dockbox button { margin: 8px auto 0; }

/* layers panel */
.panel { display: flex; flex-direction: column; background: #535353; min-height: 0; }
.tabs { display: flex; align-items: center; height: 36px; background: #424242; border: solid #383838; border-width: 1px 0; padding-right: 6px; }
.tabs button { width: 50px; height: 35px; justify-content: center; border-right: 1px solid #383838; color: #999; font-size: 14px; }
.tabs .sel { background: #535353; color: #eee; }
.tabs svg { margin-left: auto; }
.prow { display: flex; align-items: center; height: 36px; padding-left: 4px; border-bottom: 1px solid #424242; font-size: 14px; }
.filter { height: 40px; margin-top: 1px; padding-top: 5px; }
.lock { border: 0; height: 38px; padding-bottom: 2px; }
.kind { width: 107px; padding-left: 10px; }
.kind select { padding-left: 6px; }
.mode { width: 147px; }
.ficons, .licons { display: flex; align-items: center; }
.ficons { gap: 16px; margin-left: 21px; }
.toggle { margin-left: auto; padding-right: 5px; height: 22px; }
.toggle input { appearance: none; display: block; width: 10px; height: 22px; margin: 0; border-radius: 5px; background: radial-gradient(circle at 5px 5px, #ddd 4px, transparent 5px) #3d3d3d; }
.num { display: flex; align-items: center; gap: 6px; margin-left: auto; padding-right: 6px; color: #ccc; font-size: 15px; white-space: nowrap; }
.num span { display: flex; align-items: center; width: 66px; height: 22px; background: #454545; border: 1px solid #666; border-radius: 3px; gap: 4px; }
.num input { width: 48px; height: 20px; border: 0; border-right: 1px solid #666; background: none; padding: 0 0 0 2px; color: #eee; font-size: 14px; }
.lab { color: #ccc; width: 46px; padding-left: 3px; font-size: 15px; }
.licons { gap: 12px; margin-left: 5px; }

.layers { flex: 1; min-height: 0; display: grid; grid-template-columns: minmax(0, 1fr) 20px; overflow: hidden; }
.rows { min-width: 0; min-height: 0; overflow: hidden; }
.rows li { display: grid; grid-template-columns: 38px 1fr; height: 32px; border-bottom: 2px solid #4a4a4a; }
.rows .big { height: 52px; }
.eye, .noeye { align-self: center; justify-self: center; }
.noeye { width: 16px; height: 16px; border: 1px solid #4a4a4a; border-right-color: #707070; border-bottom-color: #707070; }
.rows li > div { display: flex; align-items: center; border-left: 1px solid #4a4a4a; color: #eee; }
.rows .cur > div { background: #6b6b6b; }
.rows .en { font-size: 14px; }
.tw { margin-right: 4px; }
.lv0 { padding-left: 3px; }
.lv1 { padding-left: 23px; }
.lv0 span, .lv1 span { margin-left: 16px; }
.lt { padding-left: 44px; }
.thumb { position: relative; width: 14px; height: 41px; margin-right: 11px; padding-top: 22px; border: 1px solid #333; background: repeating-conic-gradient(#ccc 0 25%, #fff 0 50%) 0 0 / 6px 6px; }
.framed::before { content: ""; position: absolute; inset: -4px; --h: linear-gradient(90deg, #fff 7px, transparent 7px 13px, #fff 13px); --v: linear-gradient(#fff 14px, transparent 14px 33px, #fff 33px); background: var(--h) 0 0 / 100% 1px no-repeat, var(--h) 0 100% / 100% 1px no-repeat, var(--v) 0 0 / 1px 100% no-repeat, var(--v) 100% 0 / 1px 100% no-repeat; }
.tx { padding-left: 55px; }
.tx span { margin-left: 24px; }
.padlock { margin: 0 19px 0 auto; }
.lscroll { background: #4a4a4a; display: flex; flex-direction: column; align-items: center; padding: 10px 0; }
.up { transform: scaleY(-1); }
.thumbbar { width: 14px; height: 54px; margin: 5px 0 auto; background: #6b6b6b; }
.pfoot { position: relative; display: flex; align-items: center; gap: 18px; height: 32px; border-top: 1px solid #383838; padding-left: 50px; }
.fx { font: italic 17px/20px "Noto Sans", sans-serif; width: 16px; }
.caret { position: relative; }
.caret::after { content: ""; position: absolute; right: -6px; bottom: -3px; border: 2px solid transparent; border-top-color: #eee; border-bottom: 0; }
.csdn { position: absolute; right: 14px; bottom: -2px; font: 13px/18px "Liberation Sans", sans-serif; color: #ccc; text-shadow: 1px 1px 1px #222; white-space: nowrap; }

/* taskbar strip */
.taskbar { display: flex; justify-content: space-between; background: #eee; overflow: hidden; padding: 0 6px 0 60px; }
.searchbox { width: 430px; background: #fff; border: 1px solid #bbb; border-bottom: 0; }
.clock { color: #000; font-size: 15px; line-height: 20px; padding: 4px 88px 0 0; border-right: 1px solid #bbb; }

/* network meter */
.netpill { position: absolute; left: 51px; top: 88px; width: 110px; height: 50px; border-radius: 25px; background: #fff; color: #666; font-size: 12px; line-height: 18px; padding: 7px 0 0 14px; box-shadow: 0 2px 5px rgba(0, 0, 0, .3); }
.netpill p { display: flex; align-items: center; }
.netpill span { margin: 0 9px 0 3px; }
.netball { position: absolute; left: 119px; top: 79px; width: 68px; height: 68px; border-radius: 50%; background: #fff; color: #000; box-shadow: 0 1px 6px rgba(0, 0, 0, .35); display: grid; place-items: center; }
.netball > * { grid-area: 1 / 1; }
.netball p { font-size: 28px; line-height: 34px; }
.netball small { font-size: 12px; }

/* window menu */
.menu { position: absolute; left: 650px; top: 0; width: 270px; background: #f0f0f0; border: 1px solid #999; padding: 0 2px; color: #000; box-shadow: 3px 3px 4px rgba(0, 0, 0, .5); }
.menu button { width: 100%; height: 26px; padding: 0 20px 0 21px; }
.menu .hot { background: #0078d7; color: #fff; }
.menu kbd { font: inherit; font-size: 16px; margin-left: auto; }
.menu .wide-latin { font-size: 16px; }
.scroller { height: 25px; padding: 10px 0 0 23px; }
.sep { height: 10px; }
.sep::before { content: ""; display: block; height: 5px; border-bottom: 1px solid #bbb; }
.sub { position: relative; }
.sub::after { content: ""; position: absolute; right: 7px; top: 5px; border: solid transparent; border-width: 6px 0 6px 6px; border-left-color: currentColor; }
.tick { position: relative; }
.tick::before { content: ""; position: absolute; left: 4px; top: 8px; width: 8px; height: 4px; border: solid #000; border-width: 0 0 3px 3px; transform: rotate(-48deg); }
.submenu { left: 914px; top: 111px; width: 200px; padding: 1px 2px 2px; }
```
